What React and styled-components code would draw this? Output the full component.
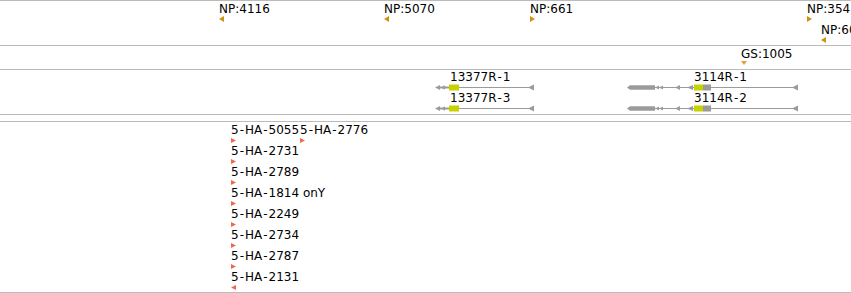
import React from "react";
import styled, { createGlobalStyle } from "styled-components";

const Global = createGlobalStyle`
  html, body { margin: 0; padding: 0; background: #fff; overflow: hidden; }
  body { font-family: "DejaVu Sans", "Liberation Sans", sans-serif; }
`;

const Panel = styled.div`
  width: 851px;
  height: 293px;
  overflow: hidden;
  display: flex;
  flex-direction: column;
  background: #fff;
`;

const Track = styled.div`
  position: relative;
  box-sizing: border-box;
  flex: 0 0 ${(p) => p.$h}px;
  height: ${(p) => p.$h}px;
  border-top: 1px solid #bbb;
  overflow: visible;
`;

const Feature = styled.div`
  position: absolute;
  left: ${(p) => p.$x}px;
  top: ${(p) => p.$y}px;
  display: flex;
  flex-direction: column;
  align-items: flex-start;
`;

const Label = styled.span`
  display: block;
  font-size: 12px;
  line-height: 14px;
  height: 14px;
  color: #000;
  white-space: nowrap;
  padding-left: ${(p) => p.$indent || 0}px;
`;

const Dash = styled.span`
  margin: 0 1px;
`;

const Glyph = styled.svg`
  display: block;
  margin-top: ${(p) => p.$gap || 0}px;
`;

const COLORS = {
  np: "#d2900c",
  gs: "#e6a136",
  ha: "#ef6a4a",
  gene: "#9b9b9b",
  exon: "#c6d300",
};

function Text({ children, indent }) {
  const parts = String(children).split("-");
  return (
    <Label $indent={indent}>
      {parts.map((p, i) => (
        <React.Fragment key={i}>
          {i > 0 && <Dash>-</Dash>}
          {p}
        </React.Fragment>
      ))}
    </Label>
  );
}

function Marker({ dir, color, w = 5, h = 5, gap = 0 }) {
  let pts;
  if (dir === "left") pts = `${w},0 0,${h / 2} ${w},${h}`;
  else if (dir === "right") pts = `0,0 ${w},${h / 2} 0,${h}`;
  else pts = `0,0 ${w},0 ${w / 2},${h}`;
  return (
    <Glyph width={w} height={h} $gap={gap} viewBox={`0 0 ${w} ${h}`}>
      <polygon points={pts} fill={color} />
    </Glyph>
  );
}

function Gene13377() {
  const c = COLORS.gene;
  return (
    <Glyph width={100} height={7} viewBox="0 0 100 7">
      <rect x="14" y="3" width="80" height="1" fill={c} />
      <rect x="4" y="2.5" width="10" height="2" fill={c} />
      <polygon points="0,3.5 5,1 5,6" fill={c} />
      <polygon points="6,3.5 10,1.3 10,5.7" fill={c} />
      <rect x="14" y="0.5" width="10" height="6" fill={COLORS.exon} />
      <polygon points="93,3.5 99,0.5 99,6.5" fill={c} />
    </Glyph>
  );
}

function Gene3114() {
  const c = COLORS.gene;
  return (
    <Glyph width={171} height={7} viewBox="0 0 171 7">
      <rect x="28" y="3" width="138" height="1" fill={c} />
      <polygon points="0,3.5 3,1.3 28,1.3 28,5.7 3,5.7" fill={c} />
      <polygon points="28,3.5 32,1.4 32,5.6" fill={c} />
      <polygon points="32,3.5 36,1.4 36,5.6" fill={c} />
      <polygon points="48,3.5 53,1 53,6" fill={c} />
      <polygon points="60,3.5 66,1 66,6" fill={c} />
      <rect x="67" y="0.5" width="9" height="6" fill={COLORS.exon} />
      <rect x="76" y="0.5" width="8" height="6" fill={c} />
      <polygon points="165,3.5 171,0.5 171,6.5" fill={c} />
    </Glyph>
  );
}

const npFeatures = [
  { label: "NP:4116", x: 219, y: 1, dir: "left" },
  { label: "NP:5070", x: 384, y: 1, dir: "left" },
  { label: "NP:661", x: 530, y: 1, dir: "right" },
  { label: "NP:354", x: 807, y: 1, dir: "right" },
  { label: "NP:60", x: 821, y: 22, dir: "left" },
];

const haFeatures = [
  { label: "5-HA-5055", x: 231, row: 0, dir: "right" },
  { label: "5-HA-2776", x: 300, row: 0, dir: "right" },
  { label: "5-HA-2731", x: 231, row: 1, dir: "right" },
  { label: "5-HA-2789", x: 231, row: 2, dir: "right" },
  { label: "5-HA-1814 onY", x: 231, row: 3, dir: "right" },
  { label: "5-HA-2249", x: 231, row: 4, dir: "right" },
  { label: "5-HA-2734", x: 231, row: 5, dir: "right" },
  { label: "5-HA-2787", x: 231, row: 6, dir: "right" },
  { label: "5-HA-2131", x: 231, row: 7, dir: "left" },
];

export default function App() {
  return (
    <>
      <Global />
      <Panel>
        <Track $h={45}>
          {npFeatures.map((f) => (
            <Feature key={f.label} $x={f.x} $y={f.y}>
              <Text>{f.label}</Text>
              <Marker dir={f.dir} color={COLORS.np} w={5} h={6} gap={0} />
            </Feature>
          ))}
        </Track>
        <Track $h={24}>
          <Feature $x={741} $y={1}>
            <Text>GS:1005</Text>
            <Marker dir="down" color={COLORS.gs} w={6} h={4} gap={0} />
          </Feature>
        </Track>
        <Track $h={45}>
          <Feature $x={435} $y={0}>
            <Text indent={15}>13377R-1</Text>
            <Gene13377 />
          </Feature>
          <Feature $x={435} $y={21}>
            <Text indent={15}>13377R-3</Text>
            <Gene13377 />
          </Feature>
          <Feature $x={627} $y={0}>
            <Text indent={67}>3114R-1</Text>
            <Gene3114 />
          </Feature>
          <Feature $x={627} $y={21}>
            <Text indent={67}>3114R-2</Text>
            <Gene3114 />
          </Feature>
        </Track>
        <Track $h={7} />
        <Track $h={171}>
          {haFeatures.map((f) => (
            <Feature key={f.label} $x={f.x} $y={1 + f.row * 21}>
              <Text>{f.label}</Text>
              <Marker dir={f.dir} color={COLORS.ha} w={5} h={5} gap={1} />
            </Feature>
          ))}
        </Track>
        <Track $h={1} />
      </Panel>
    </>
  );
}
